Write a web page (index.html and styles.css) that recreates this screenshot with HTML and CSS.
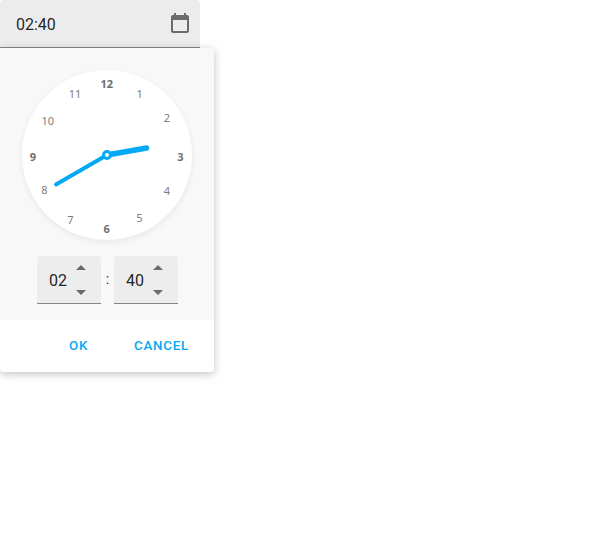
FILE: index.html
```html
<!DOCTYPE html>
<html lang="en">
<head>
<meta charset="utf-8">
<title>Time picker</title>
<link rel="stylesheet" href="styles.css">
</head>
<body>
<div class="field">
  <span class="field-value">02:40</span>
  <svg class="field-icon" viewBox="0 0 24 24"><path d="M19 3h-1V1h-2v2H8V1H6v2H5c-1.11 0-1.99.9-1.99 2L3 19c0 1.1.89 2 2 2h14c1.1 0 2-.9 2-2V5c0-1.1-.9-2-2-2zm0 16H5V8h14v11z"/></svg>
</div>
<div class="popup">
  <div class="picker">
    <div class="dial">
      <svg viewBox="0 0 170 170">
        <g class="digits">
          <text class="major" x="84.700" y="17.500">12</text>
          <text x="117.700" y="28">1</text>
          <text x="145" y="52">2</text>
          <text class="major" x="158.500" y="90.500">3</text>
          <text x="145" y="125">4</text>
          <text x="117.500" y="152">5</text>
          <text class="major" x="84.700" y="162.500">6</text>
          <text x="48.500" y="153.500">7</text>
          <text x="22.500" y="124">8</text>
          <text class="major" x="11" y="90.500">9</text>
          <text x="25.700" y="55">10</text>
          <text x="53" y="28">11</text>
        </g>
        <path class="hand hour" d="M85 85L124.500 78"/>
        <path class="hand minute" d="M85 85L34 114.500"/>
        <circle class="pin" cx="85" cy="85" r="3.500"/>
      </svg>
    </div>
    <div class="spinners">
      <div class="spinner">
        <span>02</span>
        <svg viewBox="0 0 10 30"><path d="M0 5L5 0l5 5zM0 25h10l-5 5z"/></svg>
      </div>
      <span class="colon">:</span>
      <div class="spinner">
        <span>40</span>
        <svg viewBox="0 0 10 30"><path d="M0 5L5 0l5 5zM0 25h10l-5 5z"/></svg>
      </div>
    </div>
  </div>
  <div class="actions">
    <button class="ok">OK</button>
    <button class="cancel">CANCEL</button>
  </div>
</div>
</body>
</html>
```

FILE: styles.css
```css
* { box-sizing: border-box; }
body {
  margin: 0;
  min-height: 550px;
  background: #fff;
  font-family: Roboto, sans-serif;
  font-size: 16px;
  color: rgba(0, 0, 0, .87);
}
.field {
  width: 200px;
  height: 48px;
  padding: 0 8px 0 16px;
  display: flex;
  align-items: center;
  justify-content: space-between;
  background: #ececec;
  border-bottom: 1px solid #858585;
  border-radius: 4px 4px 0 0;
}
.field-value { padding-top: 2px; line-height: 20px; }
.field-icon { width: 24px; height: 24px; fill: #6b6b6b; }
.popup {
  width: 214px;
  height: 324px;
  background: #fff;
  border-radius: 4px;
  overflow: hidden;
  box-shadow: 0 2px 8px rgba(0, 0, 0, .25);
}
.picker {
  height: 272px;
  padding-top: 22px;
  background: #f8f8f8;
}
.dial {
  width: 170px;
  height: 170px;
  margin: 0 auto;
  border-radius: 50%;
  background: #fff;
  box-shadow: 0 2px 6px rgba(0, 0, 0, .07);
}
.dial svg { display: block; width: 170px; height: 170px; }
.digits {
  font-family: "Noto Sans", sans-serif;
  font-size: 11px;
  text-anchor: middle;
  fill: #7c7c7c;
}
.major { font-weight: 700; fill: #707070; }
.hand { stroke: #03a9f4; stroke-linecap: round; }
.hour { stroke-width: 5.5; }
.minute { stroke-width: 4; }
.pin { fill: #fff; stroke: #03a9f4; stroke-width: 3; }
.spinners {
  display: flex;
  justify-content: center;
  margin-top: 16px;
}
.spinner {
  width: 64px;
  height: 48px;
  padding: 0 15px 0 12.5px;
  display: flex;
  align-items: center;
  justify-content: space-between;
  background: #ededed;
  border-bottom: 1px solid #858585;
  border-radius: 4px 4px 0 0;
}
.spinner span { padding-top: 1px; }
.spinner svg { width: 10px; height: 30px; fill: #6b6b6b; }
.colon { width: 13px; padding-left: 1px; text-align: center; font-size: 14px; line-height: 47px; }
.actions {
  height: 52px;
  padding-right: 25px;
  display: flex;
  align-items: center;
  justify-content: flex-end;
  gap: 46px;
}
.actions button {
  padding: 0;
  border: 0;
  background: none;
  color: #03a9f4;
  font: 500 13.33px/20px Roboto, sans-serif;
  letter-spacing: .75px;
}
```
